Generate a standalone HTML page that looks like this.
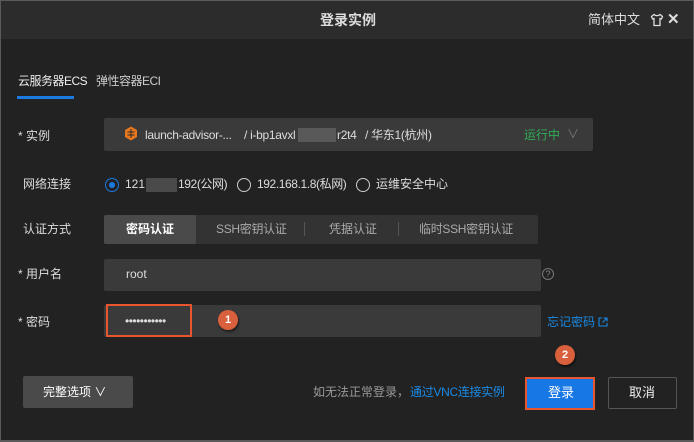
<!DOCTYPE html>
<html><head><meta charset="utf-8"><style>
*{margin:0;padding:0;box-sizing:border-box}
body{width:694px;height:442px;background:#5a5a5a;font-family:"Liberation Sans","Noto Sans CJK SC",sans-serif;font-size:12px;color:#ddd;position:relative;overflow:hidden}
.win{position:absolute;left:1px;top:1px;width:692px;height:439px;background:#222}
.hdr{position:absolute;left:0;top:0;width:692px;height:38px;background:#2c2c2c}
.a{position:absolute;white-space:nowrap;line-height:16px}
.box{position:absolute;background:#3a3a3a;border-radius:2px}
.lbl{color:#ddd}
.radio{position:absolute;width:14px;height:14px;border-radius:50%;border:1px solid #ccc}
.badge{position:absolute;width:20px;height:20px;border-radius:50%;background:#d9603c;color:#fff;font-size:11px;font-weight:bold;text-align:center;line-height:20px;box-shadow:1px 2px 2px rgba(0,0,0,.5)}
</style></head><body>
<div class="win">
<div class="hdr"></div>
<div class="a" style="left:319px;top:11px;font-size:14px;font-weight:bold;color:#ddd">登录实例</div>
<div class="a" style="left:587px;top:11px;font-size:13px;color:#ddd">简体中文</div>
<svg class="a" style="left:649px;top:12px" width="14" height="14" viewBox="0 0 14 14"><path d="M4 1.5 L1.5 3.5 L2.5 6 L4 5.5 L4 12.5 L10 12.5 L10 5.5 L11.5 6 L12.5 3.5 L10 1.5 Q7 4 4 1.5Z" fill="none" stroke="#ddd" stroke-width="1.3"/></svg>
<div class="a" style="left:666px;top:11px;font-size:15px;font-weight:bold;color:#ddd">✕</div>

<div class="a" style="left:17px;top:72px;color:#eee;font-size:12px;letter-spacing:-0.5px">云服务器ECS</div>
<div class="a" style="left:16px;top:95px;width:57px;height:3px;background:#1a7ae0"></div>
<div class="a" style="left:95px;top:72px;color:#ccc;font-size:12px;letter-spacing:-0.5px">弹性容器ECI</div>

<div class="a lbl" style="left:17px;top:127px">* 实例</div>
<div class="box" style="left:103px;top:117px;width:489px;height:33px"></div>
<svg class="a" style="left:123px;top:125px" width="14" height="15" viewBox="0 0 14 15"><path d="M7 0.5 L13 4 L13 11 L7 14.5 L1 11 L1 4Z" fill="#e8781e"/><path d="M3.5 6h7M3.5 9h7M7 3v9" stroke="#2a2a2a" stroke-width="1"/></svg>
<div class="a" style="left:144px;top:126px;color:#ddd;letter-spacing:-0.3px">launch-advisor-...</div>
<div class="a" style="left:243px;top:126px;color:#ddd;letter-spacing:-0.3px">/ i-bp1avxl</div>
<div class="a" style="left:297px;top:127px;width:38px;height:14px;background:#666;opacity:.7"></div>
<div class="a" style="left:336px;top:126px;color:#ddd;letter-spacing:-0.3px">r2t4</div>
<div class="a" style="left:364px;top:126px;color:#ddd;letter-spacing:-0.3px">/ 华东1(杭州)</div>
<div class="a" style="left:523px;top:126px;color:#2fae55">运行中</div>
<div class="a" style="left:566px;top:125px;color:#777;font-size:12px">∨</div>

<div class="a lbl" style="left:22px;top:175px">网络连接</div>
<div class="radio" style="left:104px;top:177px;border-color:#1a7ae0"></div>
<div class="a" style="left:108px;top:181px;width:6px;height:6px;border-radius:50%;background:#1a7ae0"></div>
<div class="a" style="left:124px;top:175px;color:#ddd">121</div>
<div class="a" style="left:145px;top:177px;width:31px;height:14px;background:#555;opacity:.8"></div>
<div class="a" style="left:177px;top:175px;color:#ddd;letter-spacing:-0.4px">192(公网)</div>
<div class="radio" style="left:236px;top:177px"></div>
<div class="a" style="left:256px;top:175px;color:#ddd;letter-spacing:-0.4px">192.168.1.8(私网)</div>
<div class="radio" style="left:355px;top:177px"></div>
<div class="a" style="left:375px;top:175px;color:#ddd">运维安全中心</div>

<div class="a lbl" style="left:22px;top:220px">认证方式</div>
<div class="box" style="left:103px;top:214px;width:434px;height:29px;background:#333"></div>
<div class="box" style="left:103px;top:214px;width:92px;height:29px;background:#4a4a4a"></div>
<div class="a" style="left:125px;top:220px;color:#fff;font-weight:bold">密码认证</div>
<div class="a" style="left:215px;top:220px;color:#aaa;letter-spacing:-0.3px">SSH密钥认证</div>
<div class="a" style="left:303px;top:221px;width:1px;height:14px;background:#555"></div>
<div class="a" style="left:328px;top:220px;color:#aaa">凭据认证</div>
<div class="a" style="left:397px;top:221px;width:1px;height:14px;background:#555"></div>
<div class="a" style="left:418px;top:220px;color:#aaa;letter-spacing:-0.3px">临时SSH密钥认证</div>

<div class="a lbl" style="left:17px;top:265px">* 用户名</div>
<div class="box" style="left:103px;top:258px;width:437px;height:32px"></div>
<div class="a" style="left:125px;top:265px;color:#ddd">root</div>
<div class="a" style="left:541px;top:267px;width:12px;height:12px;border-radius:50%;border:1px solid #777;color:#888;font-size:9px;text-align:center;line-height:10px">?</div>

<div class="a lbl" style="left:17px;top:313px">* 密码</div>
<div class="box" style="left:103px;top:304px;width:437px;height:32px"></div>
<div class="a" style="left:105px;top:303px;width:86px;height:33px;border:2px solid #e8552e"></div>
<div class="a" style="left:124px;top:312px;color:#ddd;font-size:12px;letter-spacing:-0.5px">•••••••••••</div>
<div class="badge" style="left:217px;top:309px">1</div>
<div class="a" style="left:546px;top:313px;color:#1a8ae6">忘记密码</div>
<svg class="a" style="left:597px;top:316px" width="10" height="10" viewBox="0 0 10 10"><path d="M4 1H1v8h8V6M5.5 1H9v3.5M9 1L4.5 5.5" fill="none" stroke="#1a8ae6" stroke-width="1.1"/></svg>

<div class="badge" style="left:554px;top:344px">2</div>

<div class="box" style="left:22px;top:375px;width:110px;height:32px;background:#4a4a4a"></div>
<div class="a" style="left:42px;top:383px;color:#fff">完整选项 ∨</div>
<div class="a" style="left:312px;top:383px;color:#999">如无法正常登录，</div>
<div class="a" style="left:409px;top:383px;color:#1a8ae6;letter-spacing:-0.3px">通过VNC连接实例</div>
<div class="a" style="left:524px;top:376px;width:70px;height:33px;border:2px solid #e8552e;background:#1677e5"></div>
<div class="a" style="left:547px;top:384px;color:#fff;font-size:13px">登录</div>
<div class="a" style="left:607px;top:376px;width:69px;height:32px;border:1px solid #555;border-radius:2px"></div>
<div class="a" style="left:628px;top:384px;color:#eee;font-size:13px">取消</div>
</div>
</body></html>
